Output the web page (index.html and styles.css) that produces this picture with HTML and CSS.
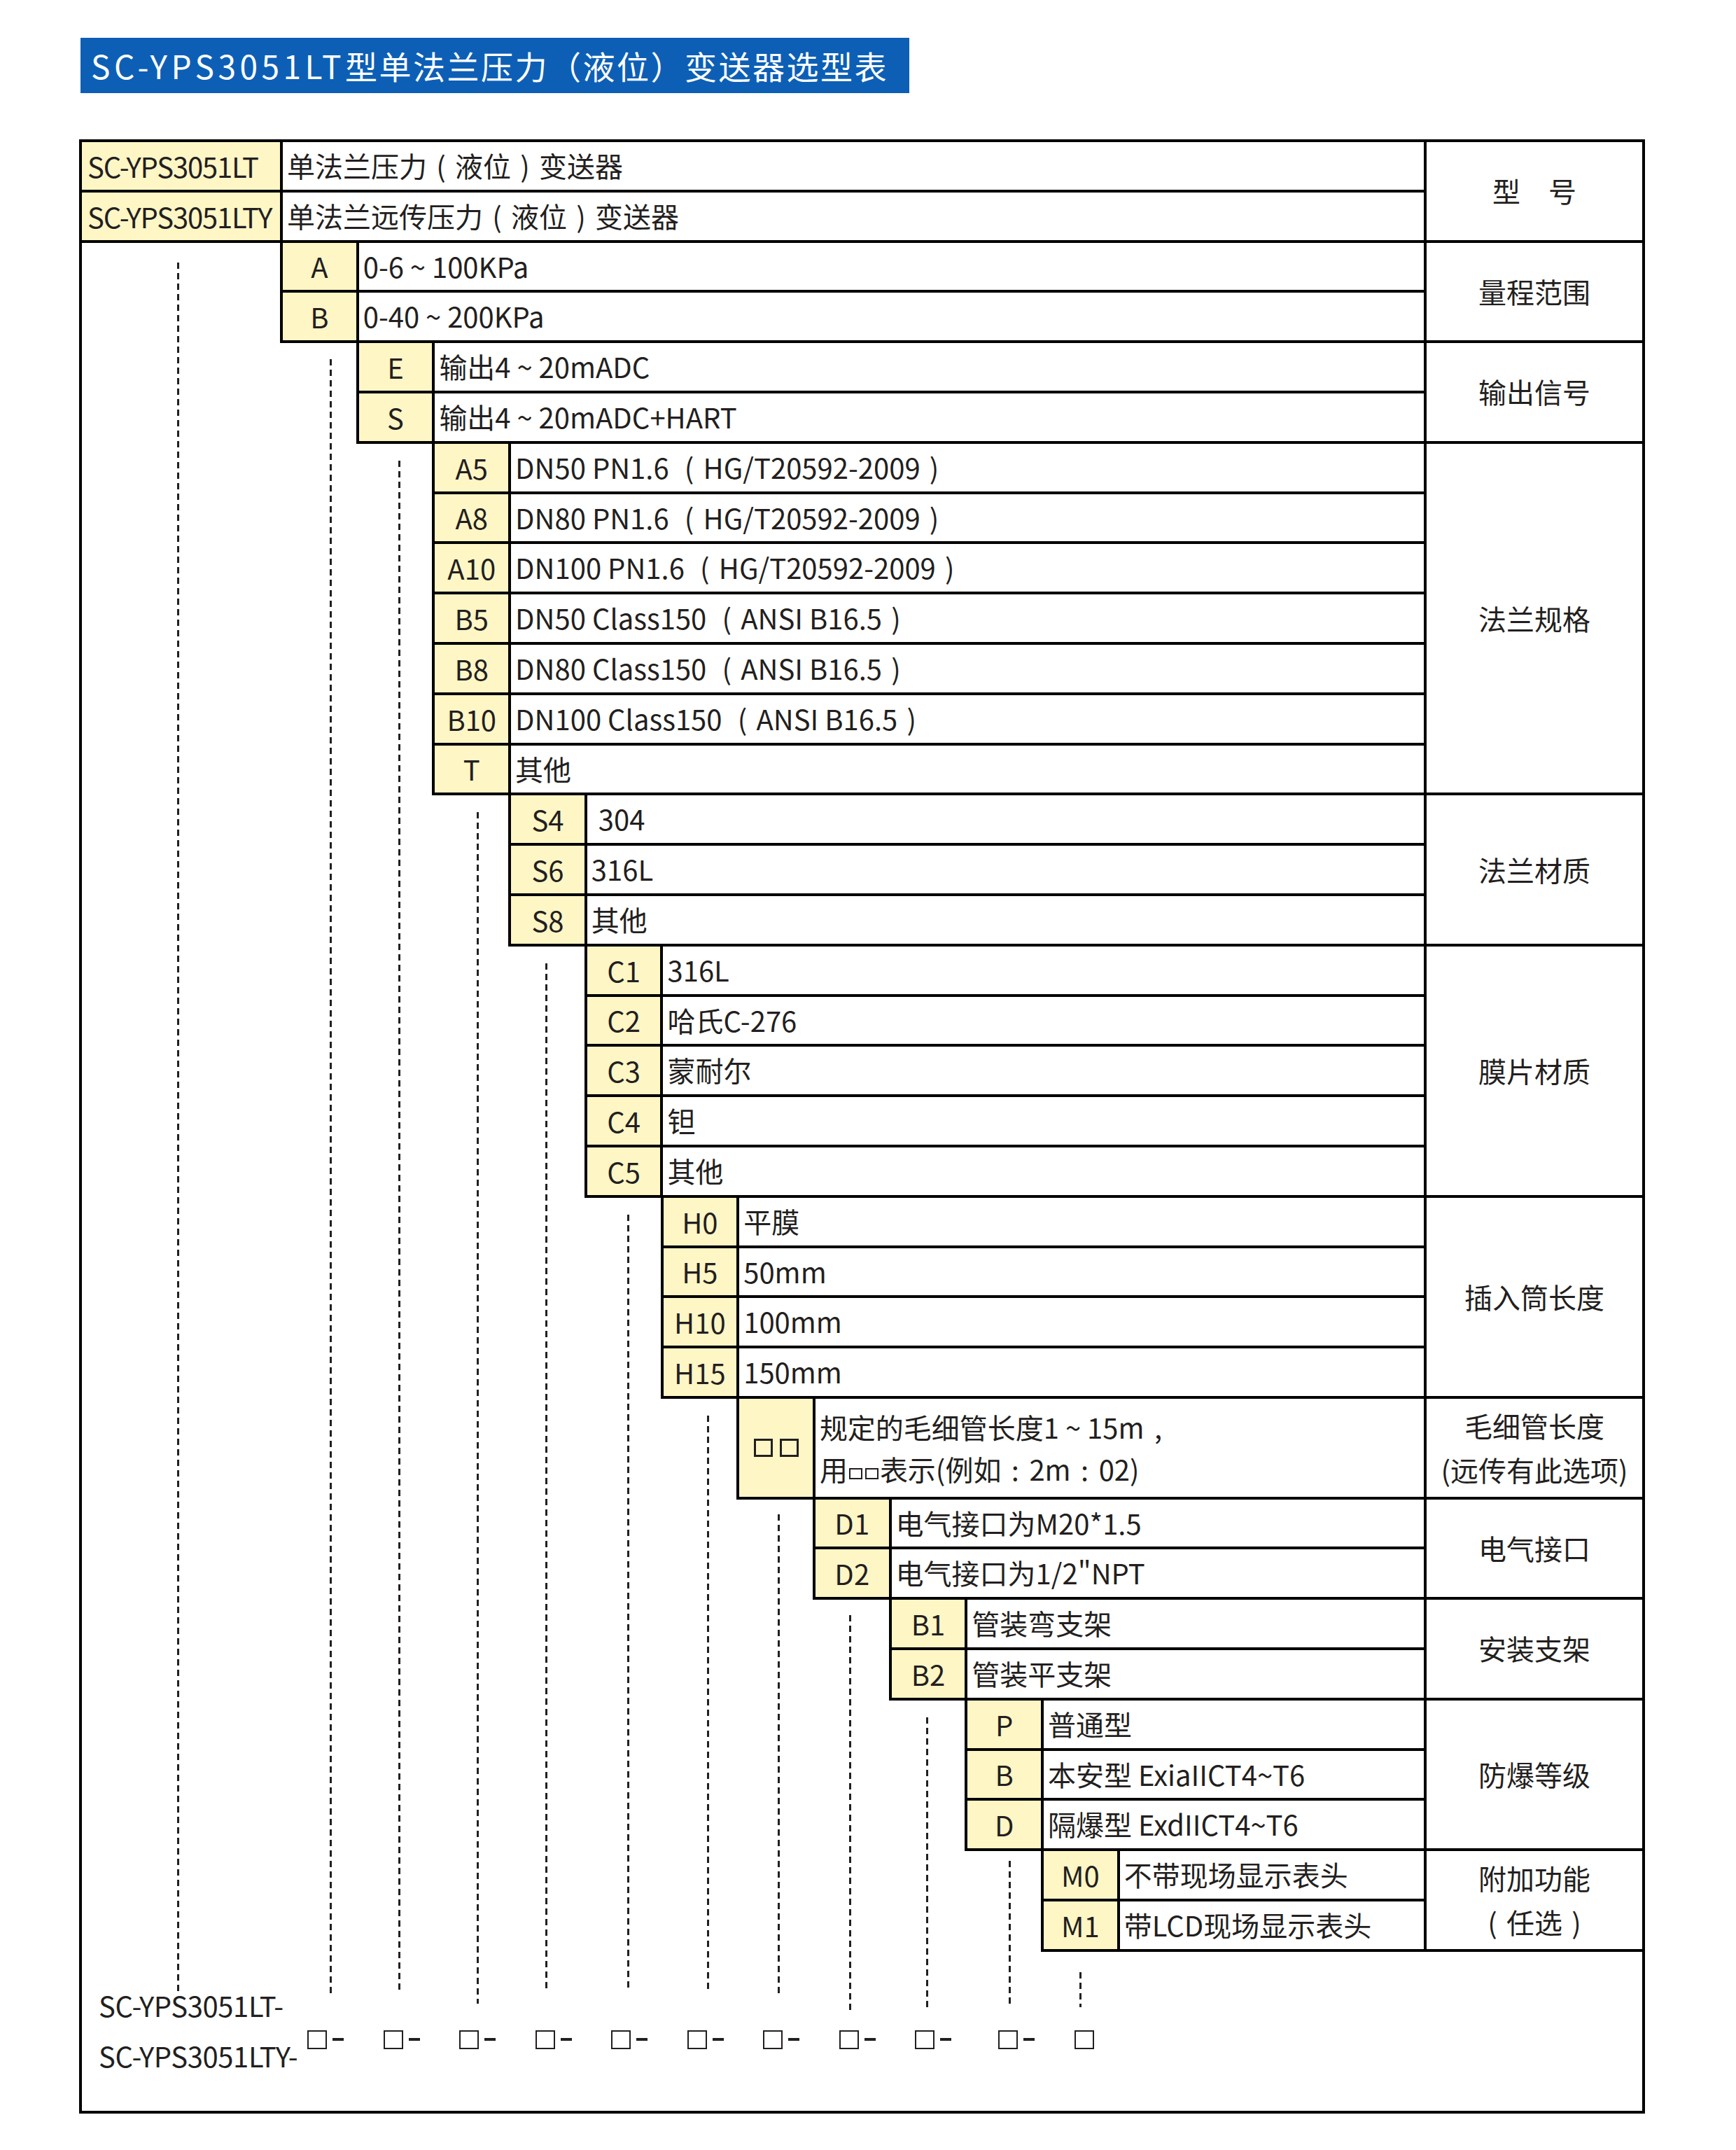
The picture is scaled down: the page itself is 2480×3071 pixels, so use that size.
FILE: index.html
```html
<!DOCTYPE html>
<html lang="zh-CN">
<head>
<meta charset="utf-8">
<title>SC-YPS3051LT型单法兰压力（液位）变送器选型表</title>
<link rel="stylesheet" href="styles.css">
</head>
<body>
<div class="banner"><span class="lat">SC-YPS3051LT</span>型单法兰压力（液位）变送器选型表</div>

<div class="table">
  <div class="grp lv0">
    <div class="opts">
      <div class="row"><div class="code">SC-YPS3051LT</div><div class="desc">单法兰压力<span class="fp">(</span>液位<span class="fp">)</span>变送器</div></div>
      <div class="row"><div class="code">SC-YPS3051LTY</div><div class="desc">单法兰远传压力<span class="fp">(</span>液位<span class="fp">)</span>变送器</div></div>
    </div>
    <div class="label">型　号</div>
  </div>

  <div class="grp lv1">
    <div class="opts">
      <div class="row"><div class="code">A</div><div class="desc">0-6<span class="fp">~</span>100KPa</div></div>
      <div class="row"><div class="code">B</div><div class="desc">0-40<span class="fp">~</span>200KPa</div></div>
    </div>
    <div class="label">量程范围</div>
  </div>

  <div class="grp lv2">
    <div class="opts">
      <div class="row"><div class="code">E</div><div class="desc">输出4<span class="fp">~</span>20mADC</div></div>
      <div class="row"><div class="code">S</div><div class="desc">输出4<span class="fp">~</span>20mADC+HART</div></div>
    </div>
    <div class="label">输出信号</div>
  </div>

  <div class="grp lv3">
    <div class="opts">
      <div class="row"><div class="code">A5</div><div class="desc">DN50 PN1.6 <span class="fp">(</span>HG/T20592-2009<span class="fp">)</span></div></div>
      <div class="row"><div class="code">A8</div><div class="desc">DN80 PN1.6 <span class="fp">(</span>HG/T20592-2009<span class="fp">)</span></div></div>
      <div class="row"><div class="code">A10</div><div class="desc">DN100 PN1.6 <span class="fp">(</span>HG/T20592-2009<span class="fp">)</span></div></div>
      <div class="row"><div class="code">B5</div><div class="desc">DN50 Class150 <span class="fp">(</span>ANSI B16.5<span class="fp">)</span></div></div>
      <div class="row"><div class="code">B8</div><div class="desc">DN80 Class150 <span class="fp">(</span>ANSI B16.5<span class="fp">)</span></div></div>
      <div class="row"><div class="code">B10</div><div class="desc">DN100 Class150 <span class="fp">(</span>ANSI B16.5<span class="fp">)</span></div></div>
      <div class="row"><div class="code">T</div><div class="desc">其他</div></div>
    </div>
    <div class="label">法兰规格</div>
  </div>

  <div class="grp lv4">
    <div class="opts">
      <div class="row"><div class="code">S4</div><div class="desc ind">304</div></div>
      <div class="row"><div class="code">S6</div><div class="desc">316L</div></div>
      <div class="row"><div class="code">S8</div><div class="desc">其他</div></div>
    </div>
    <div class="label">法兰材质</div>
  </div>

  <div class="grp lv5">
    <div class="opts">
      <div class="row"><div class="code">C1</div><div class="desc">316L</div></div>
      <div class="row"><div class="code">C2</div><div class="desc">哈氏C-276</div></div>
      <div class="row"><div class="code">C3</div><div class="desc">蒙耐尔</div></div>
      <div class="row"><div class="code">C4</div><div class="desc">钽</div></div>
      <div class="row"><div class="code">C5</div><div class="desc">其他</div></div>
    </div>
    <div class="label">膜片材质</div>
  </div>

  <div class="grp lv6">
    <div class="opts">
      <div class="row"><div class="code">H0</div><div class="desc">平膜</div></div>
      <div class="row"><div class="code">H5</div><div class="desc">50mm</div></div>
      <div class="row"><div class="code">H10</div><div class="desc">100mm</div></div>
      <div class="row"><div class="code">H15</div><div class="desc">150mm</div></div>
    </div>
    <div class="label">插入筒长度</div>
  </div>

  <div class="grp lv7">
    <div class="opts">
      <div class="row tall"><div class="code"><i class="cbox"></i><i class="cbox"></i></div><div class="desc two">规定的毛细管长度1<span class="fp">~</span>15m<span class="fp">,</span><br>用<i class="tbox"></i><i class="tbox"></i>表示(例如<span class="fp">:</span>2m<span class="fp">:</span>02)</div></div>
    </div>
    <div class="label">毛细管长度<br>(远传有此选项)</div>
  </div>

  <div class="grp lv8">
    <div class="opts">
      <div class="row"><div class="code">D1</div><div class="desc">电气接口为M20*1.5</div></div>
      <div class="row"><div class="code">D2</div><div class="desc">电气接口为1/2"NPT</div></div>
    </div>
    <div class="label">电气接口</div>
  </div>

  <div class="grp lv9">
    <div class="opts">
      <div class="row"><div class="code">B1</div><div class="desc">管装弯支架</div></div>
      <div class="row"><div class="code">B2</div><div class="desc">管装平支架</div></div>
    </div>
    <div class="label">安装支架</div>
  </div>

  <div class="grp lv10">
    <div class="opts">
      <div class="row"><div class="code">P</div><div class="desc">普通型</div></div>
      <div class="row"><div class="code">B</div><div class="desc">本安型 ExiaIICT4~T6</div></div>
      <div class="row"><div class="code">D</div><div class="desc">隔爆型 ExdIICT4~T6</div></div>
    </div>
    <div class="label">防爆等级</div>
  </div>

  <div class="grp lv11">
    <div class="opts">
      <div class="row"><div class="code">M0</div><div class="desc">不带现场显示表头</div></div>
      <div class="row"><div class="code">M1</div><div class="desc">带LCD现场显示表头</div></div>
    </div>
    <div class="label"><span>附加功能<br><span class="fp">(</span>任选<span class="fp">)</span></span></div>
  </div>

  <div class="foot">
    <div class="models">
      <div>SC-YPS3051LT-</div>
      <div>SC-YPS3051LTY-</div>
    </div>
    <div class="slots">
      <span class="slot"><i class="sq"></i><i class="dash"></i></span>
      <span class="slot"><i class="sq"></i><i class="dash"></i></span>
      <span class="slot"><i class="sq"></i><i class="dash"></i></span>
      <span class="slot"><i class="sq"></i><i class="dash"></i></span>
      <span class="slot"><i class="sq"></i><i class="dash"></i></span>
      <span class="slot"><i class="sq"></i><i class="dash"></i></span>
      <span class="slot"><i class="sq"></i><i class="dash"></i></span>
      <span class="slot"><i class="sq"></i><i class="dash"></i></span>
      <span class="slot wide"><i class="sq"></i><i class="dash"></i></span>
      <span class="slot"><i class="sq"></i><i class="dash"></i></span>
      <span class="slot"><i class="sq"></i></span>
    </div>
  </div>

  <div class="dl d0"></div>
  <div class="dl d1"></div>
  <div class="dl d2"></div>
  <div class="dl d3"></div>
  <div class="dl d4"></div>
  <div class="dl d5"></div>
  <div class="dl d6"></div>
  <div class="dl d7"></div>
  <div class="dl d8"></div>
  <div class="dl d9"></div>
  <div class="dl d10"></div>
  <div class="dl d11"></div>
</div>
</body>
</html>
```

FILE: styles.css
```css
html, body {
  margin: 0;
  padding: 0;
  background: #ffffff;
}

body {
  width: 2480px;
  min-height: 3071px;
  font-family: "Noto Sans CJK SC", "Noto Sans", sans-serif;
  color: #231f20;
  font-size: 40px;
}

/* ---------- title banner ---------- */
.banner {
  margin: 54px 0 0 115px;
  width: 1184px;
  height: 79px;
  box-sizing: border-box;
  padding-left: 15px;
  background: #0d5fb6;
  color: #ffffff;
  font-size: 46px;
  line-height: 79px;
  letter-spacing: 2.5px;
  white-space: nowrap;
}

.banner .lat {
  letter-spacing: 5.5px;
}

/* ---------- table ---------- */
.table {
  position: relative;
  margin: 66px 0 0 113px;
  width: 2237px;
  box-sizing: border-box;
  border: 4px solid #000;
}

.grp {
  display: flex;
}

.opts {
  flex: 1;
  border-left: 4px solid #000;
}

.lv0 .opts { border-left: none; }

.lv1  { margin-left: 283px; }
.lv2  { margin-left: 391.7px; }
.lv3  { margin-left: 500.4px; }
.lv4  { margin-left: 609.1px; }
.lv5  { margin-left: 717.8px; }
.lv6  { margin-left: 826.5px; }
.lv7  { margin-left: 935.2px; }
.lv8  { margin-left: 1043.9px; }
.lv9  { margin-left: 1152.6px; }
.lv10 { margin-left: 1261.3px; }
.lv11 { margin-left: 1370px; }

.row {
  display: flex;
  height: 71.8px;
  box-sizing: border-box;
  border-bottom: 4px solid #000;
}

.row.tall {
  height: 143.6px;
}

.code {
  flex: none;
  width: 108.7px;
  box-sizing: border-box;
  border-right: 4px solid #000;
  background: #fff6c6;
  display: flex;
  align-items: center;
  justify-content: center;
  white-space: nowrap;
}

.lv0 .code {
  width: 287px;
  justify-content: flex-start;
  padding-left: 8px;
  letter-spacing: -1.2px;
}

.desc {
  flex: 1;
  padding-left: 6px;
  line-height: 67.8px;
  white-space: nowrap;
}

.desc.ind {
  padding-left: 16px;
}

.desc.two {
  line-height: 60px;
  padding-top: 9.8px;
}

/* punctuation centred in a full-width cell */
.fp {
  display: inline-block;
  width: 1em;
  text-align: center;
}

.label {
  flex: none;
  width: 312px;
  box-sizing: border-box;
  border-left: 4px solid #000;
  border-bottom: 4px solid #000;
  display: flex;
  align-items: center;
  justify-content: center;
  text-align: center;
  line-height: 63px;
}

/* placeholder squares */
.cbox {
  display: inline-block;
  width: 27px;
  height: 26px;
  box-sizing: border-box;
  border: 3px solid #231f20;
  margin: 0 5px;
}

.tbox {
  display: inline-block;
  width: 19px;
  height: 16px;
  box-sizing: border-box;
  border: 2px solid #231f20;
  margin: 0 2px;
  vertical-align: 2px;
}

/* ---------- footer (ordering code) ---------- */
.foot {
  display: flex;
  height: 227.2px;
  box-sizing: border-box;
  padding: 40px 0 0 24px;
}

.models {
  flex: none;
  width: 298px;
  line-height: 72px;
  white-space: nowrap;
  letter-spacing: -0.4px;
}

.slots {
  display: flex;
  margin-top: 72.2px;
  height: 27px;
}

.slot {
  flex: none;
  display: flex;
  align-items: center;
  width: 108.5px;
}

.slot.wide {
  width: 119px;
}

.sq {
  display: block;
  width: 28px;
  height: 27px;
  box-sizing: border-box;
  border: 2px solid #231f20;
}

.dash {
  display: block;
  width: 16px;
  height: 4px;
  margin-left: 8px;
  background: #231f20;
}

/* ---------- dashed guide lines (overlay) ---------- */
.dl {
  position: absolute;
  width: 3px;
  background: repeating-linear-gradient(to bottom, #231f20 0 9px, transparent 9px 15px);
}

.d0  { left: 135.5px;  top: 172px;  height: 2475px; }
.d1  { left: 353.5px;  top: 310px;  height: 2339px; }
.d2  { left: 451.5px;  top: 455px;  height: 2189px; }
.d3  { left: 563.5px;  top: 957px;  height: 1702px; }
.d4  { left: 661.5px;  top: 1173px; height: 1469px; }
.d5  { left: 778.5px;  top: 1532px; height: 1110px; }
.d6  { left: 892.5px;  top: 1819px; height: 825px; }
.d7  { left: 993.5px;  top: 1960px; height: 685px; }
.d8  { left: 1095.5px; top: 2104px; height: 565px; }
.d9  { left: 1205.5px; top: 2250px; height: 420px; }
.d10 { left: 1323.5px; top: 2455px; height: 207px; }
.d11 { left: 1424.5px; top: 2614px; height: 50px; }
```
